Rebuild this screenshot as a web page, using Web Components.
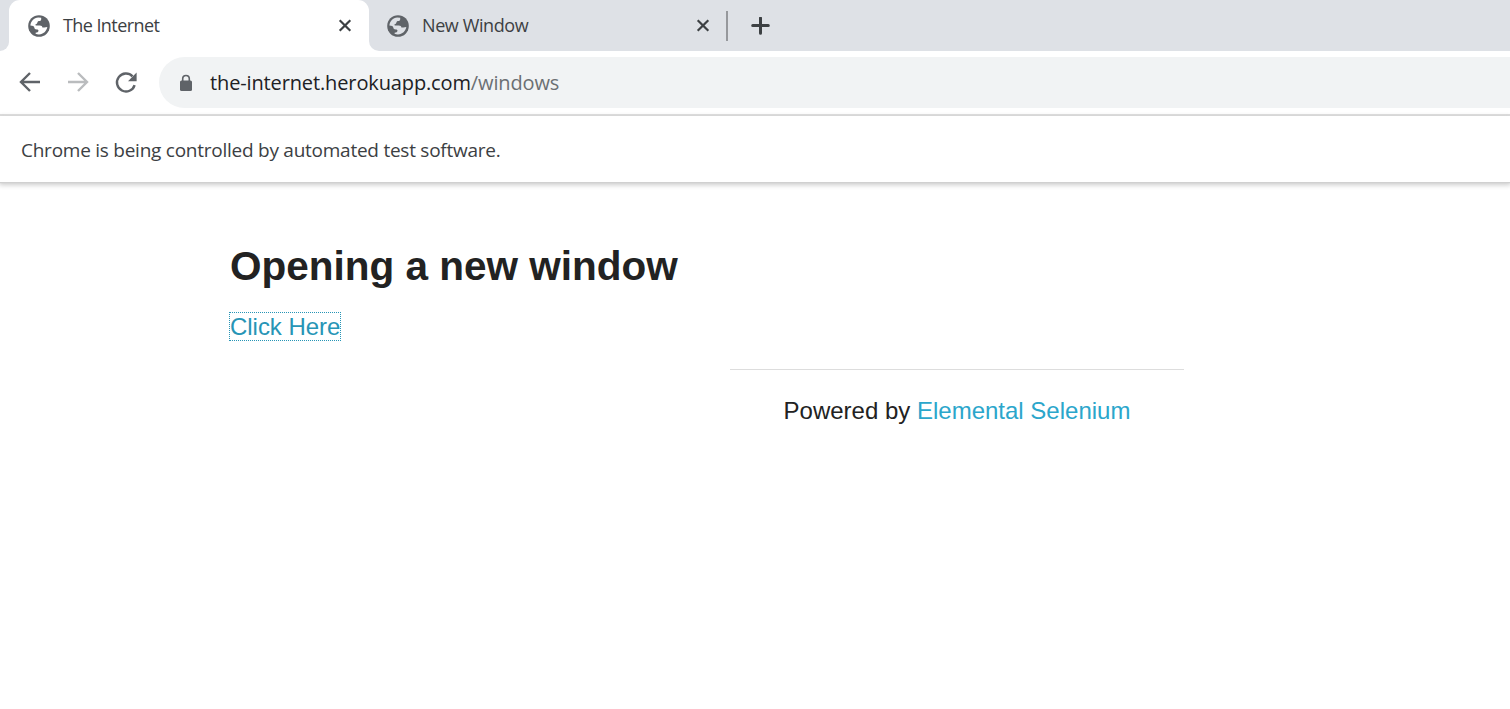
<!DOCTYPE html>
<html lang="en"><head><meta charset="utf-8"><title>The Internet</title>
<style>html,body{margin:0;height:100%;background:#fff;overflow:hidden}</style></head>
<body><browser-window></browser-window>
<script>
const define=(name,html)=>{const t=document.createElement('template');t.innerHTML=html;
customElements.define(name,class extends HTMLElement{constructor(){super();this.attachShadow({mode:'open'}).append(t.content.cloneNode(true));}});};

define('globe-icon',`<style>:host{display:block;width:22px;height:22px}svg{display:block}</style>
<svg width="22" height="22" viewBox="0 0 22 22"><circle cx="11" cy="11" r="10.8" fill="#5f6368"/><path fill="var(--tab-bg,#fff)" d="M2.4 10.4C2.7 6 6 2.8 10.2 2.4L13.2 2.8V4.2C13.2 5.2 12.4 6 11.4 6C10.2 6 9.4 6.6 9.4 7.6C9.4 8.5 8.8 9 7.8 9.2C7.2 9.4 7.3 10.2 8 10.4H11.8C13.4 10.4 14.4 11.2 14.4 12.4C16 12.6 17.4 12.7 19.3 12.1C18.7 16.2 15.4 19.4 11 19.5C9.7 19.5 8.6 19.3 7.6 18.8V17.7C9.2 17.7 10.4 17.1 10.5 15.8C10.5 14.9 9.7 14.4 8.8 14.4C7.2 14.4 6.4 13.6 6.3 12.4C6.2 11.1 4.8 10.4 2.4 10.4Z"/></svg>`);
define('close-icon',`<style>:host{display:block;width:14px;height:14px}svg{display:block}</style><svg width="14" height="14" viewBox="0 0 14 14"><path d="M1.7 1.2L12.3 11.8M12.3 1.2L1.7 11.8" stroke="#3c4043" stroke-width="2.2"/></svg>`);
define('browser-tab',`<style>:host{display:flex;box-sizing:border-box;align-items:center;height:51px;color:#3c4043;font:18px/24px "Open Sans","Noto Sans",sans-serif;letter-spacing:var(--ls,0)}
globe-icon{margin-right:13px}span{flex:1;white-space:nowrap;margin-top:-1px}</style><globe-icon></globe-icon><span><slot></slot></span><close-icon></close-icon>`);
define('tab-strip',`<style>:host{display:flex;height:51px;background:#dee1e6;align-items:center}
.cap{width:9px;height:51px;background:#fff}.cap i{display:block;height:51px;background:#dee1e6;border-bottom-right-radius:9px}
.active{--ls:-.58px;width:360px;padding:0 17px 0 19px;background:#fff;border-radius:11px 11px 0 0}
.end{width:10px;height:51px;background:#fff}.end i{display:block;height:51px;background:#dee1e6;border-bottom-left-radius:10px}
.idle{--tab-bg:#dee1e6;--ls:-.4px;width:331px;padding-left:8px}.sep{width:2px;height:30px;background:#96989c;margin:1px 23px 0 16px}svg{display:block}</style>
<div class="cap"><i></i></div><browser-tab class="active">The Internet</browser-tab><div class="end"><i></i></div><browser-tab class="idle">New Window</browser-tab><div class="sep"></div>
<svg width="19" height="18" viewBox="0 0 19 18"><path d="M9.5 1V16.2M1.7 8.6H17.3" stroke="#3c4043" stroke-width="3" stroke-linecap="round"/></svg>`);
define('address-bar',`<style>:host{display:flex;align-items:center;box-sizing:border-box;height:51px;background:#f1f3f4;border-radius:26px 0 0 26px;padding-left:20px;color:#202124;font:20px/28px "Open Sans","Noto Sans",sans-serif}
svg{display:block;margin-right:17px}.t{white-space:nowrap;letter-spacing:-.13px}.p{color:#6b6f73}</style>
<svg width="14" height="18" viewBox="0 0 14 18"><rect x="1" y="6.5" width="12" height="10.5" rx="1.5" fill="#5f6368"/><path d="M3.7 8V4.8a3.3 3.3 0 0 1 6.6 0V8" fill="none" stroke="#5f6368" stroke-width="1.6"/></svg>
<span class="t">the-internet.herokuapp.com<span class="p">/windows</span></span>`);
define('browser-toolbar',`<style>:host{display:flex;box-sizing:border-box;height:65px;border-bottom:2px solid #dcdcdc;align-items:center;padding-left:18px}
svg{display:block;flex:none;margin:-1px 24px 0 0}address-bar{flex:1;margin-left:-3px}</style>
<svg width="24" height="24" viewBox="0 0 24 24" fill="none" stroke="#5f6368" stroke-width="2.4"><path d="M22 12H3.5M12 3L3 12L12 21"/></svg>
<svg width="24" height="24" viewBox="0 0 24 24" fill="none" stroke="#babcbe" stroke-width="2.4"><path d="M2 12H20.5M12 3L21 12L12 21"/></svg>
<svg width="24" height="24" viewBox="0 0 24 24"><path d="M20.6 15.1A9 9 0 1 1 18.5 6.3" fill="none" stroke="#5f6368" stroke-width="2.4"/><path d="M22.6 2.6V11.2H14Z" fill="#5f6368"/></svg>
<address-bar></address-bar>`);
define('info-bar',`<style>:host{display:flex;align-items:center;box-sizing:border-box;height:66px;padding:2px 0 0 21px;background:#fff;box-shadow:0 1px 1px #d0d0d0,0 2px 5px 1px #ccc;color:#3c4043;font:19px/28px "Open Sans","Noto Sans",sans-serif;letter-spacing:-.25px;white-space:nowrap}</style><slot></slot>`);
define('web-page',`<style>:host{display:block;padding:61px 326px 0 230px;font:24px/36px "Liberation Sans",Arial,sans-serif;color:#222}
h3{margin:0;font-size:40.5px;line-height:46px}.link{margin-top:25px;display:flex}.link a{width:110px;white-space:nowrap;line-height:27px;outline:1px dotted #2795b6;color:#2795b6;margin-top:-1px;letter-spacing:-.04px}a{color:#2ba6cb}
footer{width:454px;margin:29px 0 0 500px;border-top:1px solid #ddd;padding-top:23px;text-align:center;white-space:nowrap}</style>
<h3>Opening a new window</h3><div class="link"><a>Click Here</a></div><footer>Powered by <a>Elemental Selenium</a></footer>`);
define('browser-window',`<style>:host{display:flex;flex-direction:column;height:709px}info-bar{flex:none}</style><tab-strip></tab-strip><browser-toolbar></browser-toolbar><info-bar>Chrome is being controlled by automated test software.</info-bar><web-page></web-page>`);
</script></body></html>
